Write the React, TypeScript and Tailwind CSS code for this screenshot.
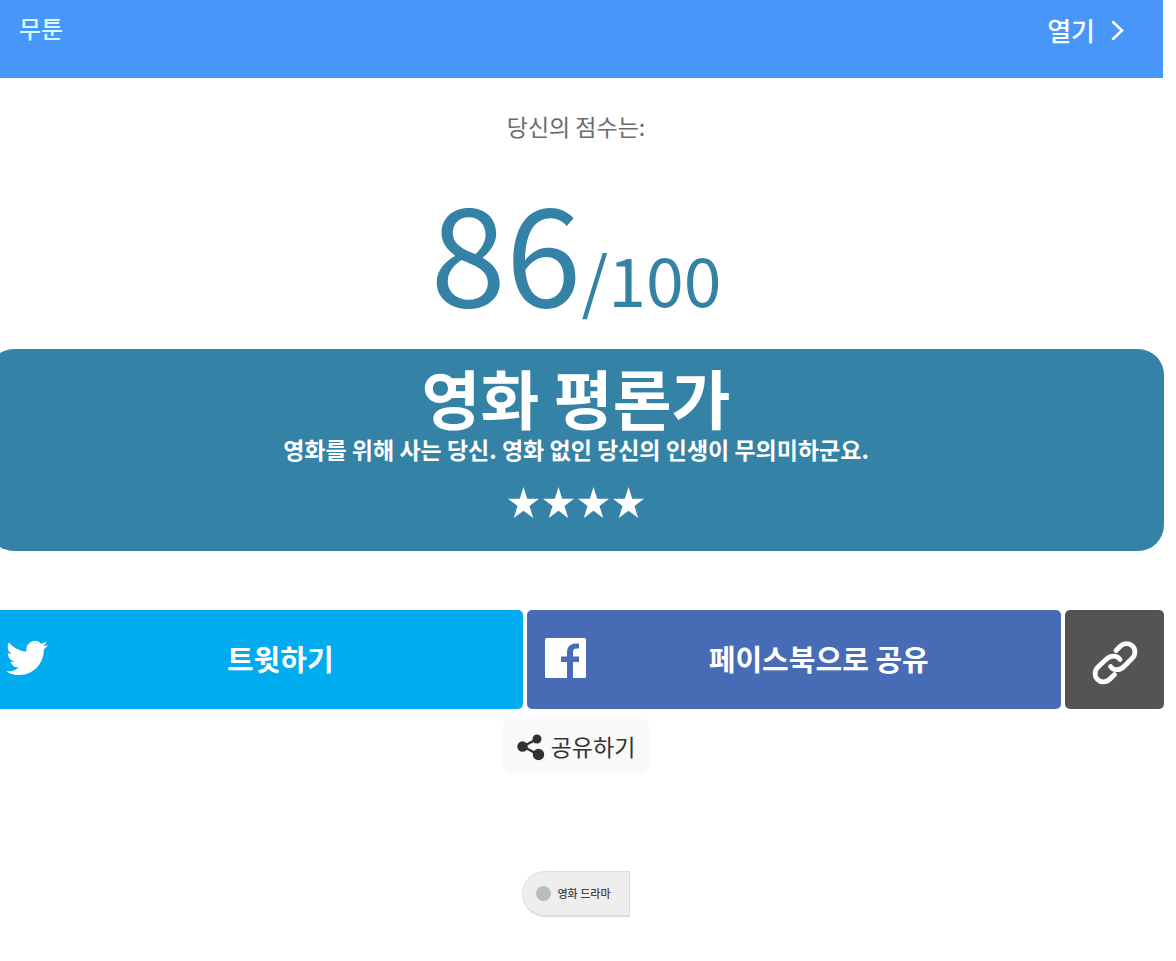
import type { ReactNode } from 'react'

const STARS = 4

interface ShareButtonProps {
  label: string
  color: string
  icon: ReactNode
}

function ShareButton({ label, color, icon }: ShareButtonProps) {
  return (
    <button className={`flex flex-1 items-center rounded-[5px] pr-[10px] pb-1 pl-[18px] ${color}`}>
      {icon}
      <span className="flex-1 text-[29px] leading-10 font-bold text-white">{label}</span>
    </button>
  )
}

function TwitterIcon() {
  return (
    <svg className="h-[42px] w-[42px] shrink-0" viewBox="0 0 24 24" fill="white" aria-hidden="true">
      <path d="M23.953 4.57a10 10 0 01-2.825.775 4.958 4.958 0 002.163-2.723c-.951.555-2.005.959-3.127 1.184a4.92 4.92 0 00-8.384 4.482C7.69 8.095 4.067 6.13 1.64 3.162a4.822 4.822 0 00-.666 2.475c0 1.71.87 3.213 2.188 4.096a4.904 4.904 0 01-2.228-.616v.06a4.923 4.923 0 003.946 4.827 4.996 4.996 0 01-2.212.085 4.936 4.936 0 004.604 3.417 9.867 9.867 0 01-6.102 2.105c-.39 0-.779-.023-1.17-.067a13.995 13.995 0 007.557 2.209c9.053 0 13.998-7.496 13.998-13.985 0-.21 0-.42-.015-.63A9.935 9.935 0 0024 4.59z" />
    </svg>
  )
}

function FacebookIcon() {
  return (
    <svg className="h-[42px] w-[42px] shrink-0" viewBox="0 0 42 42" aria-hidden="true">
      <rect y="1" width="41" height="40" rx="1.5" fill="white" />
      <path
        d="M22 41V25h-6v-5.5h6V16c0-6 3.2-9.500 8.300-9.500 1.500 0 2.700.1 3.700.3v4.700h-2.300c-2.900 0-3.700 1.500-3.700 3.900v4.100h6V25h-6v16z"
        fill="#486bb6"
      />
    </svg>
  )
}

function LinkIcon() {
  return (
    <svg
      className="h-[46px] w-[46px]"
      viewBox="0 0 46 46"
      fill="none"
      stroke="white"
      strokeWidth="4.8"
      strokeLinecap="round"
      aria-hidden="true"
    >
      <path d="M24 10.5l4-4c3.8-3.8 9.200-3.800 12.500-.5s3.300 8.700-.5 12.500l-8 8c-4.500 4.500-11 4-13.500 0" />
      <path d="M28 19.5c-3-4.500-9.500-4.500-14 0l-8 7.500c-3.800 3.800-3.800 9.200-.5 12.500s8.700 3.300 12.500-.5l4.500-4.500" />
    </svg>
  )
}

function ShareIcon() {
  return (
    <svg className="mt-0.5 h-7 w-7" viewBox="0 0 28 28" fill="#303030" aria-hidden="true">
      <path d="M20 6L6 13.5L21 21.5" fill="none" stroke="#303030" strokeWidth="2.5" />
      <circle cx="20" cy="6" r="4.5" />
      <circle cx="5.5" cy="13.5" r="5.2" />
      <circle cx="21.5" cy="21.5" r="5.7" />
    </svg>
  )
}

export default function App() {
  return (
    <div className="min-h-screen overflow-x-hidden bg-white font-['Noto_Sans_CJK_KR',sans-serif]">
      <header className="mr-[13px] flex h-[78px] items-start justify-between bg-[#4896fa] pr-[38px] pl-[19px] text-white">
        <span className="pt-3 text-2xl leading-8 font-medium text-[#d5fbff]">무툰</span>
        <a href="#open" className="flex items-center gap-4 pt-3 text-[26px] leading-9 font-medium">
          열기
          <svg className="h-5 w-3.5" viewBox="0 0 14 20" fill="none" stroke="currentColor" strokeWidth="2.5" aria-hidden="true">
            <path d="M2 2l9 8.500L2 19" strokeLinecap="round" />
          </svg>
        </a>
      </header>

      {/* The result column runs past the left edge of the window */}
      <main className="mr-3 -ml-3 flex flex-col text-center">
        <p className="pt-[30px] text-[23px] leading-9 text-[#6b6b6b]">당신의 점수는:</p>
        <p className="mt-5 text-[136px] leading-[168px] text-[#3582a7]">
          86<span className="text-[68px] leading-none">/100</span>
        </p>

        <section className="mt-[17px] flex flex-col items-center rounded-[26px] bg-[#3582a7] pt-2 pb-8 text-white">
          <h1 className="text-[64px] leading-[78px] font-bold">영화 평론가</h1>
          <p className="text-[23px] leading-7 font-bold">영화를 위해 사는 당신. 영화 없인 당신의 인생이 무의미하군요.</p>
          <div className="mt-6 flex gap-1" role="img" aria-label="별 4개">
            {Array.from({ length: STARS }, (_, i) => (
              <svg key={i} className="h-8 w-[31px]" viewBox="0 0 31 32" fill="white" aria-hidden="true">
                <path d="M15.5 0l3.700 11.800H31l-9.500 7.200 3.700 12-9.700-7.300L5.800 31l3.700-12L0 11.800h11.800z" />
              </svg>
            ))}
          </div>
        </section>

        <div className="mt-[59px] flex h-[99px] gap-1">
          <ShareButton label="트윗하기" color="bg-[#00acef]" icon={<TwitterIcon />} />
          <ShareButton label="페이스북으로 공유" color="bg-[#486bb6]" icon={<FacebookIcon />} />
          <button
            className="flex w-[99px] items-center justify-center rounded-[5px] bg-[#545454] pt-1.5"
            aria-label="링크 복사"
          >
            <LinkIcon />
          </button>
        </div>

        <button className="mt-2.5 flex h-[54px] items-center gap-1.5 self-center rounded-lg bg-[#f9f9f9] px-3.5 text-[23px] text-[#333]">
          <ShareIcon />
          공유하기
        </button>

        <a
          href="#drama"
          className="mt-[98px] flex h-[46px] items-center gap-1.5 self-center rounded-l-full border border-b-2 border-[#dedede] bg-[#eee] px-[18px] pl-[13px] text-[11px] font-medium text-[#444]"
        >
          <span className="h-[15px] w-[15px] rounded-full bg-[#bcbcbc]" />
          영화 드라마
        </a>
      </main>
    </div>
  )
}
